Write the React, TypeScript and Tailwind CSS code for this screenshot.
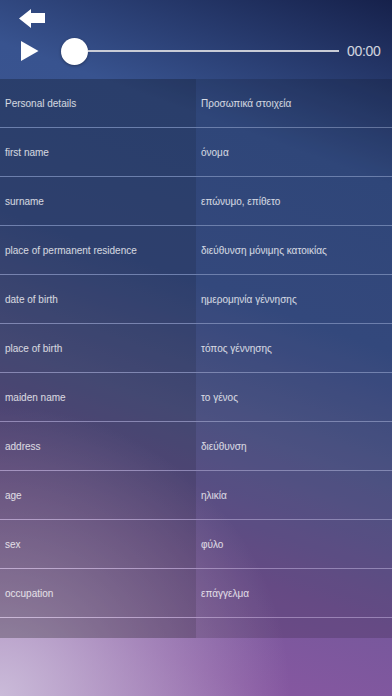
const rows: [string, string][] = [
  ["Personal details", "Προσωπικά στοιχεία"],
  ["first name", "όνομα"],
  ["surname", "επώνυμο, επίθετο"],
  ["place of permanent residence", "διεύθυνση μόνιμης κατοικίας"],
  ["date of birth", "ημερομηνία γέννησης"],
  ["place of birth", "τόπος γέννησης"],
  ["maiden name", "το γένος"],
  ["address", "διεύθυνση"],
  ["age", "ηλικία"],
  ["sex", "φύλο"],
  ["occupation", "επάγγελμα"],
  ["", ""],
];

export default function App() {
  return (
    <div
      className="w-[392px] h-[696px] overflow-hidden flex flex-col bg-[radial-gradient(circle_at_0%_100%,rgba(208,196,222,0.9)_0px,rgba(208,196,222,0)_290px),linear-gradient(200deg,#16214b_0%,#38538f_22%,#3d5592_42%,#5a6098_58%,#77589c_75%,#8657a0_88%,#9464a8_100%)]"
      style={{ fontFamily: '"Liberation Sans", Arial, sans-serif' }}
    >
      {/* player header */}
      <div className="h-[79px] shrink-0">
        <div className="pt-[9px] pl-[19px]">
          <svg width="27" height="19" viewBox="0 0 27 19">
            <path d="M0 9.5 L12 0 L12 4 L26 4 L26 14 L12 14 L12 19 Z" fill="#fff" />
          </svg>
        </div>
        <div className="flex items-center mt-[9px] h-[28px]">
          <svg className="ml-[21px]" width="18" height="20" viewBox="0 0 18 20">
            <path d="M0 0 L17.5 10 L0 20 Z" fill="#fff" />
          </svg>
          <div className="ml-[22px] w-[27px] h-[27px] rounded-full bg-white shadow-[0_1px_3px_rgba(0,0,0,0.35)] shrink-0" />
          <div className="w-[251px] h-[2px] bg-[#c9ccd6]" />
          <span className="ml-[8px] text-[14px] tracking-[-0.3px] text-white/80">00:00</span>
        </div>
      </div>

      {/* word table */}
      <div className="h-[559px] shrink-0 overflow-hidden">
        {rows.map(([en, gr], i) => (
          <div key={i} className="grid grid-cols-[196px_196px] h-[49px] border-b border-white/25">
            <div className="bg-black/25 flex items-center pl-[5px] text-[10px] text-white/80">
              {en}
            </div>
            <div className="bg-black/15 flex items-center pl-[5px] text-[10px] text-white/80">
              {gr}
            </div>
          </div>
        ))}
      </div>
    </div>
  );
}
